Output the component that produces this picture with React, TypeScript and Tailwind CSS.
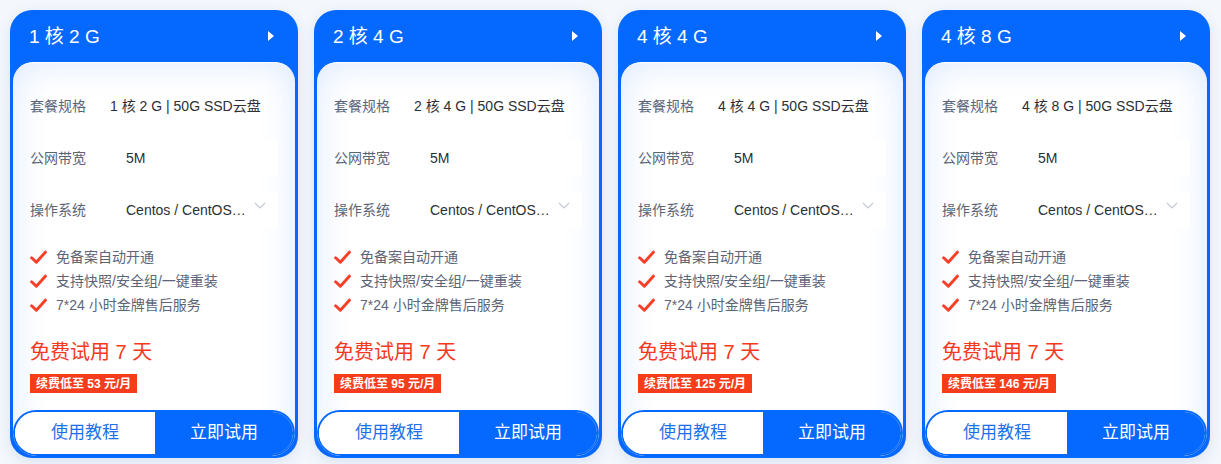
const plans = [
  { name: "1 核 2 G", price: 53 },
  { name: "2 核 4 G", price: 95 },
  { name: "4 核 4 G", price: 125 },
  { name: "4 核 8 G", price: 146 },
];

const features = ["免备案自动开通", "支持快照/安全组/一键重装", "7*24 小时金牌售后服务"];

const Check = () => (
  <svg width="17" height="15" viewBox="0 0 16 14" className="shrink-0">
    <path d="M1.5 7.2 L6 11.5 L14.5 2" fill="none" stroke="#f5412a" strokeWidth="2.8" strokeLinecap="round" strokeLinejoin="round" />
  </svg>
);

const PlanCard = ({ name, price }: { name: string; price: number }) => {
  return (
    <div className="w-[288px] rounded-[22px] bg-[#0669ff] px-[3px] pb-[2px] shadow-[0_4px_14px_rgba(30,80,180,0.12)]">
      <div className="h-[52px] flex items-center justify-between pl-[16px] pr-[21px] pt-[3px] text-white">
        <span className="text-[19px]">{name}</span>
        <svg width="6" height="10" viewBox="0 0 6 10" className="-mt-[3px]">
          <path d="M0 0 L6 5 L0 10 Z" fill="#fff" />
        </svg>
      </div>
      <div className="rounded-t-[20px] rounded-b-[24px] overflow-hidden bg-white border-t border-white shadow-[inset_0_0_36px_rgba(40,110,240,0.16)]">
        <div className="px-[17px] pt-[25px]">
          <div className="flex flex-col gap-4 text-[14px]">
            <div className="flex h-9 items-center">
              <span className="w-20 text-[#5c6478]">套餐规格</span>
              <span className="text-[#2c2f36]">{name} | 50G SSD云盘</span>
            </div>
            <div className="flex h-9 items-center">
              <span className="w-20 text-[#5c6478]">公网带宽</span>
              <div className="flex-1 h-9 bg-white flex items-center px-4 text-[#2c2f36]">5M</div>
            </div>
            <div className="flex h-9 items-center">
              <span className="w-20 text-[#5c6478]">操作系统</span>
              <div className="flex-1 h-9 bg-white flex items-center pl-4 pr-3 text-[#2c2f36]">
                <span className="w-[122px] truncate">Centos / CentOS 7.6 64位</span>
                <svg width="12" height="7" viewBox="0 0 12 7" className="ml-auto -mt-[10px]">
                  <path d="M1 1 L6 6 L11 1" fill="none" stroke="#c4c8d0" strokeWidth="1.2" />
                </svg>
              </div>
            </div>
          </div>
          <ul className="mt-[17px] flex flex-col text-[14px] text-[#5c6478]">
            {features.map((f) => (
              <li key={f} className="flex h-6 items-center gap-[9px]">
                <Check />
                <span>{f}</span>
              </li>
            ))}
          </ul>
          <div className="mt-[21px] text-[20px] leading-7 text-[#f5391c]">免费试用 7 天</div>
          <div className="mt-2 inline-flex h-[19px] items-center bg-[#f53d1c] px-[6px] text-[12px] font-bold text-white">
            续费低至 {price} 元/月
          </div>
        </div>
        <div className="mt-[15px] flex h-[46px] rounded-full border-2 border-[#0669ff] overflow-hidden text-[17px]">
          <button className="w-[140px] bg-white text-[#1f6fe8]">使用教程</button>
          <button className="flex-1 bg-[#0669ff] text-white">立即试用</button>
        </div>
      </div>
    </div>
  );
};

export default function App() {
  return (
    <div
      className="w-[1221px] h-[464px] bg-[#f4f7fc] flex items-start gap-4 pl-[10px] pt-[10px]"
      style={{ fontFamily: '"Liberation Sans", "Noto Sans CJK SC", sans-serif' }}
    >
      {plans.map((p) => (
        <PlanCard key={p.name} name={p.name} price={p.price} />
      ))}
    </div>
  );
}
